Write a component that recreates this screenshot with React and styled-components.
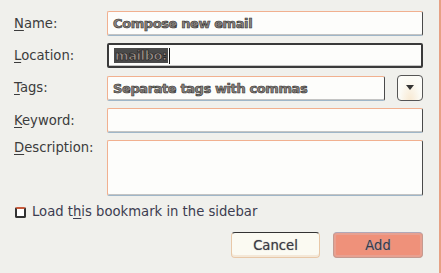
import React from 'react'
import styled, { createGlobalStyle } from 'styled-components'

const Global = createGlobalStyle`
  html, body { margin: 0; padding: 0; background: #f0f0ec; }
  body { font-family: "DejaVu Sans", "Noto Sans", sans-serif; }
`

const Dialog = styled.div`
  width: 441px;
  height: 273px;
  box-sizing: border-box;
  padding: 11px 16px 0 14px;
  background: #f0f0ec;
  border-right: 2px solid #e7a184;
  color: #3c3c3c;
  font-size: 13.2px;
`

const Form = styled.div`
  display: grid;
  grid-template-columns: 93px 1fr;
  row-gap: 7px;
  align-items: center;
`

const Label = styled.label`
  align-self: ${p => (p.$top ? 'start' : 'center')};
  line-height: 16px;
  u { text-decoration: underline; text-underline-offset: 2px; }
`

const Field = styled.div`
  box-sizing: border-box;
  height: ${p => p.$h || 25}px;
  background: #fdfdfb;
  border-style: solid;
  border-color: ${p => (p.$focus ? '#3a3a3a' : '#f1b08f #4a4a4a #9fb6c8 #f1b08f')};
  border-width: ${p => (p.$focus ? '2px' : '1px')};
  border-radius: 2px;
  display: flex;
  align-items: ${p => (p.$multi ? 'flex-start' : 'center')};
  padding: 0 5px;
  font-size: 13px;
  font-weight: bold;
  letter-spacing: -0.4px;
  color: #8e8680;
  -webkit-text-stroke: 0.6px #2e2e2e;
  box-shadow: inset 0 -1px 0 #55555555;
`

const Selected = styled.span`
  background: #4a4a4a;
  color: #9a8e88;
  -webkit-text-stroke: 0.6px #1a1a1a;
  padding: 0 1px;
`

const Caret = styled.span`
  display: inline-block;
  width: 1px;
  height: 16px;
  background: #111;
  margin-left: 1px;
`

const TagsRow = styled.div`
  display: flex;
  gap: 12px;
  align-items: center;
`

const Grow = styled.div`
  flex: 1;
`

const DropBtn = styled.div`
  width: 26px;
  height: 26px;
  box-sizing: border-box;
  border: 1px solid #555;
  border-radius: 4px;
  background: radial-gradient(ellipse at 50% 110%, #f8e8d0 0%, #fbfaf4 60%, #fdfdfb 100%);
  display: flex;
  align-items: center;
  justify-content: center;
`

const Check = styled.div`
  display: flex;
  align-items: center;
  gap: 6px;
  margin-top: 8px;
  margin-left: 1px;
  line-height: 16px;
  color: #3c3c50;
  u { text-decoration: underline; text-underline-offset: 2px; }
`

const Box = styled.span`
  width: 11px;
  height: 11px;
  box-sizing: border-box;
  border: 2px solid #333;
  border-top-color: #c85a3a;
  border-radius: 2px;
  background: #fff;
`

const Buttons = styled.div`
  display: flex;
  justify-content: flex-end;
  gap: 13px;
  margin-top: 12px;
`

const Button = styled.div`
  width: ${p => p.$w}px;
  height: 26px;
  box-sizing: border-box;
  border-radius: 4px;
  display: flex;
  align-items: center;
  justify-content: center;
  font-size: 13.2px;
  color: #3a3a44;
  background: ${p => (p.$primary ? '#ef917a' : '#fbfaf2')};
  border: 1px solid ${p => (p.$primary ? '#c49a90' : '#e8c8a8')};
  border-top-color: ${p => (p.$primary ? '#b0a8b8' : '#333')};
  box-shadow: ${p => (p.$primary ? 'inset 0 0 0 2px #e8a090' : 'inset 0 -2px 0 #f4e8d8')};
  text-shadow: ${p => (p.$primary ? '0 0 1px #8fa8c8' : '0 0 1px #888')};
`

export default function App() {
  return (
    <Dialog>
      <Global />
      <Form>
        <Label><u>N</u>ame:</Label>
        <Field>Compose new email</Field>
        <Label><u>L</u>ocation:</Label>
        <Field $focus><Selected>mailbo:</Selected><Caret /></Field>
        <Label><u>T</u>ags:</Label>
        <TagsRow>
          <Grow><Field>Separate tags with commas</Field></Grow>
          <DropBtn>
            <svg width="8" height="6" viewBox="0 0 8 6"><path d="M0 0h8L4 5z" fill="#333" /></svg>
          </DropBtn>
        </TagsRow>
        <Label><u>K</u>eyword:</Label>
        <Field />
        <Label $top><u>D</u>escription:</Label>
        <Field $h={56} $multi />
      </Form>
      <Check>
        <Box />
        <span>Load t<u>h</u>is bookmark in the sidebar</span>
      </Check>
      <Buttons>
        <Button $w={89}>Cancel</Button>
        <Button $w={90} $primary>Add</Button>
      </Buttons>
    </Dialog>
  )
}
